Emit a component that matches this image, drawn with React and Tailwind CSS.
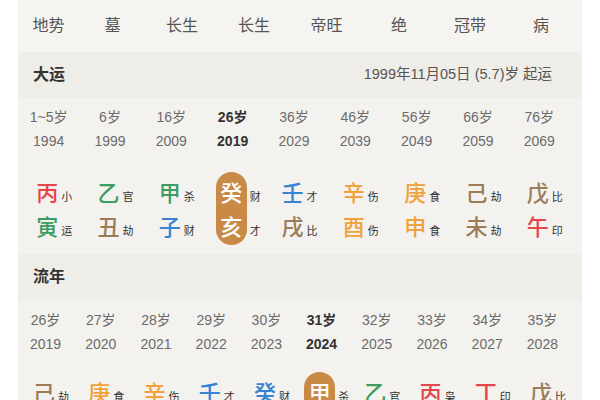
const RED = 'text-[#e4464c]';
const GREEN = 'text-[#3c9d62]';
const BLUE = 'text-[#3683d3]';
const GOLD = 'text-[#f0a23c]';
const BROWN = 'text-[#9a7c58]';

const topRow = ['地势', '墓', '长生', '长生', '帝旺', '绝', '冠带', '病'];

const dayun = [
  { age: '1~5岁', year: '1994', s: ['丙', RED, '小'], b: ['寅', GREEN, '运'] },
  { age: '6岁', year: '1999', s: ['乙', GREEN, '官'], b: ['丑', BROWN, '劫'] },
  { age: '16岁', year: '2009', s: ['甲', GREEN, '杀'], b: ['子', BLUE, '财'] },
  { age: '26岁', year: '2019', s: ['癸', BLUE, '财'], b: ['亥', BLUE, '才'], on: true },
  { age: '36岁', year: '2029', s: ['壬', BLUE, '才'], b: ['戌', BROWN, '比'] },
  { age: '46岁', year: '2039', s: ['辛', GOLD, '伤'], b: ['酉', GOLD, '伤'] },
  { age: '56岁', year: '2049', s: ['庚', GOLD, '食'], b: ['申', GOLD, '食'] },
  { age: '66岁', year: '2059', s: ['己', BROWN, '劫'], b: ['未', BROWN, '劫'] },
  { age: '76岁', year: '2069', s: ['戊', BROWN, '比'], b: ['午', RED, '印'] },
];

const liunian = [
  { age: '26岁', year: '2019', s: ['己', BROWN, '劫'], b: ['亥', BLUE, '才'] },
  { age: '27岁', year: '2020', s: ['庚', GOLD, '食'], b: ['子', BLUE, '财'] },
  { age: '28岁', year: '2021', s: ['辛', GOLD, '伤'], b: ['丑', BROWN, '劫'] },
  { age: '29岁', year: '2022', s: ['壬', BLUE, '才'], b: ['寅', GREEN, '杀'] },
  { age: '30岁', year: '2023', s: ['癸', BLUE, '财'], b: ['卯', GREEN, '官'] },
  { age: '31岁', year: '2024', s: ['甲', GREEN, '杀'], b: ['辰', BROWN, '比'], on: true },
  { age: '32岁', year: '2025', s: ['乙', GREEN, '官'], b: ['巳', RED, '枭'] },
  { age: '33岁', year: '2026', s: ['丙', RED, '枭'], b: ['午', RED, '印'] },
  { age: '34岁', year: '2027', s: ['丁', RED, '印'], b: ['未', BROWN, '劫'] },
  { age: '35岁', year: '2028', s: ['戊', BROWN, '比'], b: ['申', GOLD, '食'] },
];

function SectionHead({ title, right }) {
  return (
    <div className="h-[46px] bg-[#efede8] flex items-center justify-between pl-[15px] pr-[30px]">
      <span className="text-[16px] font-semibold text-[#333]">{title}</span>
      {right && <span className="text-[14.5px] text-[#555]">{right}</span>}
    </div>
  );
}

function AgeGrid({ items, cols }) {
  return (
    <div className={`grid ${cols} w-[552px] text-[14px] leading-[24px]`}>
      {items.map((it, i) => (
        <div
          key={i}
          className={`flex flex-col items-center ${it.on ? 'text-[#333] font-semibold' : 'text-[#6b6b6b]'}`}
        >
          <span>{it.age}</span>
          <span>{it.year}</span>
        </div>
      ))}
    </div>
  );
}

function PillarGrid({ items, cols }) {
  return (
    <div className={`grid ${cols} w-[552px]`}>
      {items.map((it, i) => (
        <div key={i} className="flex">
          <div className="flex-1" />
          <div
            className={
              it.on
                ? 'w-[31px] rounded-full bg-[#c98a47] pt-[4px] pb-[1px] flex flex-col items-center'
                : 'w-[22px] pt-[4px] flex flex-col items-center'
            }
          >
            {[it.s, it.b].map((p, j) => (
              <span
                key={j}
                className={`h-[34px] flex items-center text-[22px] font-medium ${it.on ? 'text-white' : p[1]}`}
              >
                {p[0]}
              </span>
            ))}
          </div>
          <div className="flex-1 pt-[4px] pl-[3px] flex flex-col">
            {[it.s, it.b].map((p, j) => (
              <span key={j} className="h-[34px] flex items-center pt-[8px] text-[11px] text-[#333]">
                {p[2]}
              </span>
            ))}
          </div>
        </div>
      ))}
    </div>
  );
}

export default function App() {
  return (
    <div className="w-[600px] h-[400px] overflow-hidden bg-white font-['Liberation_Sans','Noto_Sans_CJK_SC',sans-serif]">
      <div className="ml-[18px] w-[564px] h-[400px] bg-[#f4f2ee]">
        <div className="h-[52px] grid grid-cols-[61px_67px_72px_72px_73px_72px_70px_72px] items-center bg-[#f6f4f1] text-[16px] text-[#555]">
          {topRow.map((t, i) => (
            <span key={i} className="text-center">{t}</span>
          ))}
        </div>

        <SectionHead title="大运" right="1999年11月05日 (5.7)岁 起运" />
        <div className="pt-[7px]">
          <AgeGrid items={dayun} cols="grid-cols-9" />
        </div>
        <div className="mt-[19px]">
          <PillarGrid items={dayun} cols="grid-cols-9" />
        </div>

        <div className="mt-[9px]">
          <SectionHead title="流年" />
        </div>
        <div className="pt-[8px]">
          <AgeGrid items={liunian} cols="grid-cols-10" />
        </div>
        <div className="mt-[16px]">
          <PillarGrid items={liunian} cols="grid-cols-10" />
        </div>
      </div>
    </div>
  );
}
